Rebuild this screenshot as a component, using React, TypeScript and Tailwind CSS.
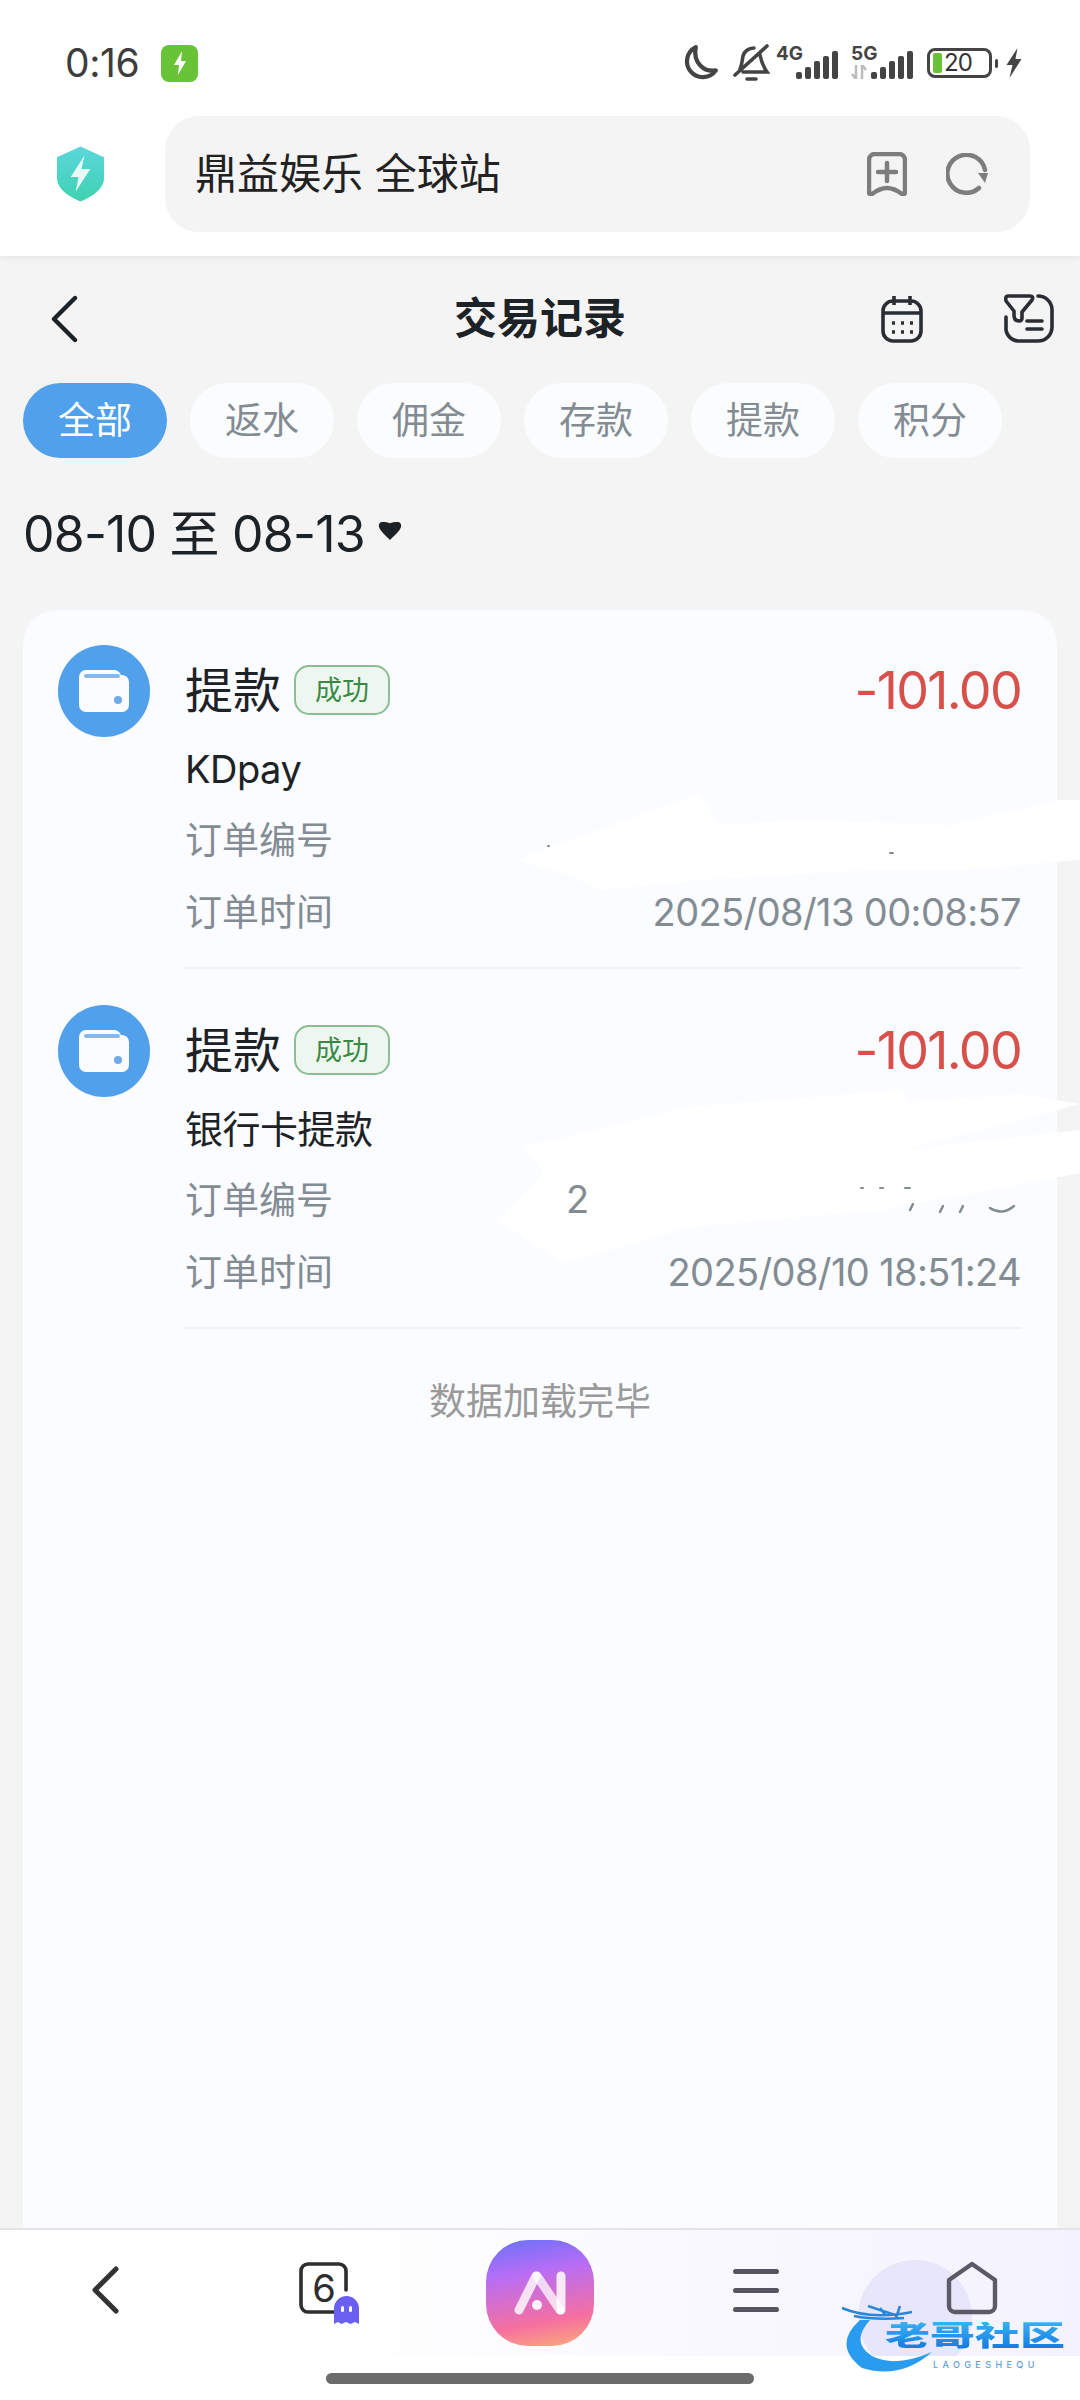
const tabs = ["全部", "返水", "佣金", "存款", "提款", "积分"];

function BackIcon({ stroke, width }: { stroke: string; width: number }) {
  return (
    <svg width="28" height="48" viewBox="0 0 28 48" fill="none" stroke={stroke} strokeWidth={width} strokeLinecap="round" strokeLinejoin="round">
      <path d="M25 3 4 24l21 21" />
    </svg>
  );
}

function WalletBadge() {
  return (
    <div className="flex h-[92px] w-[92px] shrink-0 items-center justify-center rounded-full bg-[#50a0ec]">
      <svg width="50" height="42" viewBox="0 0 50 42">
        <path d="M0 7a7 7 0 0 1 7-7h27a8 8 0 0 1 8 5h1a7 7 0 0 1 7 7v23a7 7 0 0 1-7 7H7a7 7 0 0 1-7-7z" fill="#fafcff" />
        <rect x="5" y="4" width="36" height="4" rx="2" fill="#86b8ec" />
        <circle cx="39" cy="30" r="4" fill="#6fabe8" />
      </svg>
    </div>
  );
}

function Record({ sub, time }: { sub: string; time: string }) {
  return (
    <div className="flex pl-[35px] pr-[36px]">
      <div className="pt-[35px]">
        <WalletBadge />
      </div>
      <div className="ml-[35px] h-[359px] flex-1 border-b-2 border-[#f0f2f4] pt-[53px]">
        <div className="flex h-[56px] items-center justify-between">
          <div className="flex items-center">
            <span className="text-[48px] leading-none text-[#1d2226]">提款</span>
            <span className="ml-[13px] mt-[-2px] flex h-[50px] w-[96px] items-center justify-center rounded-[15px] border-2 border-[#8dbd95] bg-[#eef7ef] text-[27px] leading-none text-[#3a8a45]">
              成功
            </span>
          </div>
          <span className="text-[52px] leading-none tracking-[-1.7px] text-[#d8504a]">-101.00</span>
        </div>
        <div className="mt-[27px] flex h-[46px] items-center text-[38px] leading-none tracking-[-0.5px] text-[#1d2226]">{sub}</div>
        <div className="mt-[24px] flex h-[48px] items-center text-[37px] leading-none text-[#848c93]">订单编号</div>
        <div className="mt-[24px] flex h-[48px] items-center justify-between text-[37px] leading-none text-[#848c93]">
          <span>订单时间</span>
          <span className="text-[38px] tracking-[-0.6px]">{time}</span>
        </div>
      </div>
    </div>
  );
}

function Signal({ label, className, arrows }: { label: string; className: string; arrows?: boolean }) {
  return (
    <div className={`relative h-[36px] w-[62px] ${className}`}>
      <span className="absolute left-0 top-[-1px] text-[19px] font-bold leading-none text-[#444]">{label}</span>
      {arrows && (
        <svg className="absolute left-0 top-[20px]" width="16" height="14" viewBox="0 0 16 14">
          <path d="M5 0v14M5 14 1 9M11 14V0M11 0l4 5" stroke="#bbb" strokeWidth="2.5" fill="none" />
        </svg>
      )}
      <div className="absolute bottom-[2px] right-0 flex items-end gap-[3px]">
        <div className="h-[7px] w-[6px] rounded-[2px] bg-[#444]" />
        <div className="h-[12px] w-[6px] rounded-[2px] bg-[#444]" />
        <div className="h-[18px] w-[6px] rounded-[2px] bg-[#444]" />
        <div className="h-[23px] w-[6px] rounded-[2px] bg-[#444]" />
        <div className="h-[28px] w-[6px] rounded-[2px] bg-[#444]" />
      </div>
    </div>
  );
}

export default function App() {
  return (
    <div className="relative flex h-[2400px] w-[1080px] flex-col overflow-hidden bg-[#f4f4f4] font-['Inter','Noto_Sans_CJK_SC',sans-serif]">
      {/* browser chrome */}
      <div className="z-10 h-[256px] shrink-0 bg-white shadow-[0_2px_6px_rgba(0,0,0,0.06)]">
        <div className="flex h-[116px] items-start justify-between pl-[65px] pr-[57px] pt-[44px]">
          <div className="flex items-center">
            <span className="text-[39px] leading-[38px] tracking-[-0.4px] text-[#3d3d3d]">0:16</span>
            <div className="ml-[22px] flex h-[37px] w-[37px] items-center justify-center rounded-[8px] bg-[#68c337]">
              <svg width="14" height="24" viewBox="0 0 14 24"><path d="M9 0 1 14h5l-1 10 8-14H8z" fill="#fff" /></svg>
            </div>
          </div>
          <div className="flex items-center text-[#444]">
            <svg width="38" height="38" viewBox="0 0 36 36" fill="none" stroke="#444" strokeWidth="4" strokeLinejoin="round">
              <path d="M14 3a15 15 0 1 0 19 22C22 27 11 18 14 3z" />
            </svg>
            <svg className="ml-[14px]" width="37" height="38" viewBox="0 0 37 38" fill="none" stroke="#444" strokeWidth="3.6" strokeLinecap="round">
              <path d="M34 2 2 31M7 25c2-4 2-8 3-13 1-4 5-8 11-8M27 11c1 5 2 10 7 17H10M14 35h9" />
            </svg>
            <Signal label="4G" className="ml-[6px]" />
            <Signal label="5G" className="ml-[13px]" arrows />
            <div className="ml-[14px] flex h-[30px] w-[65px] items-center rounded-[8px] border-[3px] border-[#444] px-[3px]">
              <div className="h-[20px] w-[9px] rounded-[2px] bg-[#68c337]" />
              <span className="ml-[2px] text-[24px] leading-none tracking-[-1px] text-[#333]">20</span>
            </div>
            <div className="ml-[3px] h-[9px] w-[3px] rounded-sm bg-[#444]" />
            <svg className="ml-[7px]" width="18" height="30" viewBox="0 0 17 30"><path d="M12 0 1 17h6l-3 13L16 11h-6z" fill="#444" /></svg>
          </div>
        </div>
        <div className="flex items-center pl-[56px] pr-[50px]">
          <svg width="49" height="56" viewBox="0 0 50 56">
            <defs>
              <linearGradient id="sh" x1="0" y1="0" x2="0" y2="1">
                <stop offset="0" stopColor="#5ad6dc" />
                <stop offset="1" stopColor="#3fd2b0" />
              </linearGradient>
            </defs>
            <path d="M25 0 49 11v21C49 43 37 51 25 56 13 51 1 43 1 32V11z" fill="url(#sh)" />
            <path d="M29 9 15 31h8l-3 15 15-23h-9z" fill="#e8fbf7" />
          </svg>
          <div className="ml-[60px] flex h-[116px] flex-1 items-center justify-between rounded-[34px] bg-[#f4f4f4] pl-[30px] pr-[42px]">
            <span className="text-[42px] leading-none text-[#222]">鼎益娱乐 全球站</span>
            <div className="flex items-center gap-[39px]">
              <svg width="40" height="44" viewBox="0 0 40 44" fill="none" stroke="#7d7d7d" strokeWidth="4.5" strokeLinejoin="round" strokeLinecap="round">
                <path d="M2 8a6 6 0 0 1 6-6h24a6 6 0 0 1 6 6v32q0 3-3 2-8-6-15-6t-15 6q-3 1-3-2z" />
                <path d="M20 11v18M11 20h18" />
              </svg>
              <svg width="42" height="42" viewBox="0 0 42 42" fill="none" stroke="#7d7d7d" strokeWidth="4.5" strokeLinecap="round">
                <path d="M39 17A19 19 0 1 0 33 35" />
                <path d="M32 20h10l-3 10z" fill="#7d7d7d" stroke="none" />
              </svg>
            </div>
          </div>
        </div>
      </div>

      {/* page header */}
      <div className="relative mt-[36px] flex h-[52px] shrink-0 items-center justify-center">
        <div className="absolute left-[50px] top-[3px]">
          <BackIcon stroke="#1d2226" width={4.4} />
        </div>
        <span className="text-[43px] font-bold leading-none text-[#1d2226]">交易记录</span>
        <svg className="absolute left-[881px] top-[3px]" width="42" height="48" viewBox="0 0 42 48" fill="none" stroke="#2a2e33" strokeWidth="3.6">
          <rect x="2" y="6" width="38" height="40" rx="10" />
          <path d="M2 18h38M13 1v9M29 1v9" />
          <path d="M11 28h3M20 28h3M29 28h3M11 37h3M20 37h3M29 37h3" strokeWidth="3.6" />
        </svg>
        <svg className="absolute left-[1004px] top-[2px]" width="50" height="50" viewBox="0 0 50 50" fill="none" stroke="#2a2e33" strokeWidth="3.6" strokeLinejoin="round" strokeLinecap="round">
          <path d="M34 2a14 14 0 0 1 14 13v18a14 14 0 0 1-14 14H14A13 13 0 0 1 2 36V23" />
          <path d="M4 2h22q4 0 2 4l-10 12v6q0 3-3 3-5 0-5-6v-4L2 7Q1 2 4 2z" />
          <path d="M23 27h15M23 35h15" />
        </svg>
      </div>

      {/* filter tabs */}
      <div className="mt-[39px] flex shrink-0 gap-[23px] pl-[23px]">
        {tabs.map((t, i) => (
          <div
            key={t}
            className={
              i === 0
                ? "flex h-[75px] w-[144px] items-center justify-center rounded-full bg-[#50a0ec] text-[37px] leading-none text-white"
                : "flex h-[75px] w-[144px] items-center justify-center rounded-full bg-[#fafcfe] text-[37px] leading-none text-[#848c93]"
            }
          >
            {t}
          </div>
        ))}
      </div>

      {/* date range */}
      <div className="mt-[46px] flex h-[60px] shrink-0 items-center pl-[23px] text-[#1d2226]">
        <span className="text-[50px] leading-none tracking-[-0.8px]">08-10 至 08-13</span>
        <svg className="ml-[12px] mt-[-6px]" width="26" height="20" viewBox="0 0 26 22">
          <path d="M5 1c3 0 6 .5 8 1.500C15 1.500 18 1 21 1c3 0 5 2 4 6-2 5-8 10-12 14C9 17 3 12 1 7 0 3 2 1 5 1z" fill="#1d2226" />
        </svg>
      </div>

      {/* records */}
      <div className="relative mx-[23px] mt-[46px] flex-1 rounded-t-[34px] bg-[#fafcff]">
        <Record sub="KDpay" time="2025/08/13 00:08:57" />
        <div className="pt-px">
          <Record sub="银行卡提款" time="2025/08/10 18:51:24" />
        </div>
        <div className="mt-[54px] text-center text-[37px] leading-none text-[#9a9a9a]">数据加载完毕</div>

        {/* hand-drawn redaction over the order numbers */}
        <svg className="absolute left-[-23px] top-[-610px]" width="1080" height="1300" viewBox="0 0 1080 1300">
          <g fill="#ffffff">
            <path d="M516 860c60-20 130-50 184-65l20 30 80-5 150 5 110-25h20v60l-120 10-90 0-170 10-100 10-30-15z" />
            <path d="M902 1090 689 1107 523 1147l21 26-48 47 69 43 124-36 192-17 199-37v-43l-178 20 178-46-60-10-110 8z" />
          </g>
          <g fill="none" stroke="#848c93" strokeLinecap="round">
            <path d="M548 846h1M890 853h3M861 1188h2M880 1188h3M905 1188h5" strokeWidth="2" />
            <path d="M990 1208q12 8 24-2M910 1210l3-6M940 1212l3-6M960 1212l3-6" strokeWidth="2.5" />
          </g>
        </svg>
        <span className="absolute left-[543px] top-[570px] text-[38px] leading-none text-[#848c93]">2</span>
      </div>

      {/* browser bottom bar */}
      <div className="relative z-10 h-[172px] shrink-0 border-t-2 border-[#e3e3e8] bg-white">
        <div className="relative grid h-[126px] grid-cols-5 items-center overflow-hidden bg-gradient-to-r from-white from-30% to-[#f4f2fe]">
          <div className="absolute left-[858px] top-[30px] h-[114px] w-[114px] rounded-full bg-[#e8e6fb]" />
          <div className="relative flex justify-center pr-[6px] pb-[6px]">
            <BackIcon stroke="#333" width={5} />
          </div>
          <div className="relative flex justify-center pb-[10px]">
            <div className="relative flex h-[52px] w-[50px] items-center justify-center text-[38px] leading-none text-[#2e2e2e]">
              <svg className="absolute left-0 top-0" width="50" height="52" viewBox="0 0 50 52" fill="none" stroke="#2e2e2e" strokeWidth="3.6" strokeLinecap="round">
                <path d="M47 28V9a7 7 0 0 0-7-7H9a7 7 0 0 0-7 7v34a7 7 0 0 0 7 7h26" />
              </svg>
              <span className="relative">6</span>
              <svg className="absolute left-[35px] top-[34px]" width="25" height="28" viewBox="0 0 25 28">
                <path d="M0 12.500a12.500 12.500 0 0 1 25 0V28l-4-2-4.500 2-4.500-2-4.500 2L4 26l-4 2z" fill="#6a5ff0" />
                <rect x="7" y="10" width="3" height="6" rx="1.500" fill="#fff" />
                <rect x="15" y="10" width="3" height="6" rx="1.500" fill="#fff" />
              </svg>
            </div>
          </div>
          <div className="relative flex justify-center">
            <div className="flex h-[106px] w-[108px] items-center justify-center rounded-[42px] bg-[linear-gradient(170deg,#6772f8_0%,#b86df5_32%,#f56fa0_74%,#fbae78_100%)]">
              <svg width="54" height="48" viewBox="0 0 54 48" fill="none" strokeLinecap="round" strokeLinejoin="round">
                <path d="M23 7 6 41" stroke="#ffffff" strokeOpacity="0.8" strokeWidth="9" />
                <path d="M24 7 47 41" stroke="#ffffff" strokeOpacity="0.75" strokeWidth="9" />
                <path d="M48 7v34" stroke="#ffffff" strokeOpacity="0.85" strokeWidth="9" />
                <circle cx="24" cy="36" r="5" fill="#ffffff" fillOpacity="0.9" />
              </svg>
            </div>
          </div>
          <div className="relative flex justify-center pb-[6px]">
            <div className="flex h-[43px] w-[46px] flex-col justify-between">
              <div className="h-[5px] rounded-full bg-[#55555f]" />
              <div className="h-[5px] rounded-full bg-[#55555f]" />
              <div className="h-[5px] rounded-full bg-[#55555f]" />
            </div>
          </div>
          <div className="relative flex justify-center pb-[10px]">
            <svg width="52" height="54" viewBox="0 0 52 54" fill="none" stroke="#5c5a68" strokeWidth="4.4" strokeLinejoin="round">
              <path d="M26 3 49 19v26a6 6 0 0 1-6 6H9a6 6 0 0 1-6-6V19z" />
            </svg>
          </div>
        </div>
        <div className="mx-auto mt-[17px] h-[11px] w-[428px] rounded-full bg-[#6b6b6b]" />
      </div>

      {/* forum watermark */}
      <div className="absolute left-[840px] top-[2300px] z-20 h-[80px] w-[230px]">
        <svg className="absolute left-0 top-0" width="100" height="80" viewBox="0 0 100 80" fill="none">
          <path d="M20 20Q-8 45 22 68 60 80 92 52 55 68 32 56 10 42 30 20z" fill="#2a9cf0" />
          <path d="M2 8Q30 20 72 12M14 16q20 4 50 2M28 6l30 10M40 8l6 8M60 6l-4 12" stroke="#2a86d8" strokeWidth="2.5" />
        </svg>
        <div className="absolute left-[45px] top-[22px] origin-top scale-y-[0.62] whitespace-nowrap bg-gradient-to-b from-[#38b0f5] to-[#1478e0] bg-clip-text text-[45px] font-black leading-none text-transparent">
          老哥社区
        </div>
        <div className="absolute left-[93px] top-[60px] whitespace-nowrap text-[9px] font-medium leading-none tracking-[4.4px] text-[#5a9fd8]">LAOGESHEQU</div>
      </div>
    </div>
  );
}
